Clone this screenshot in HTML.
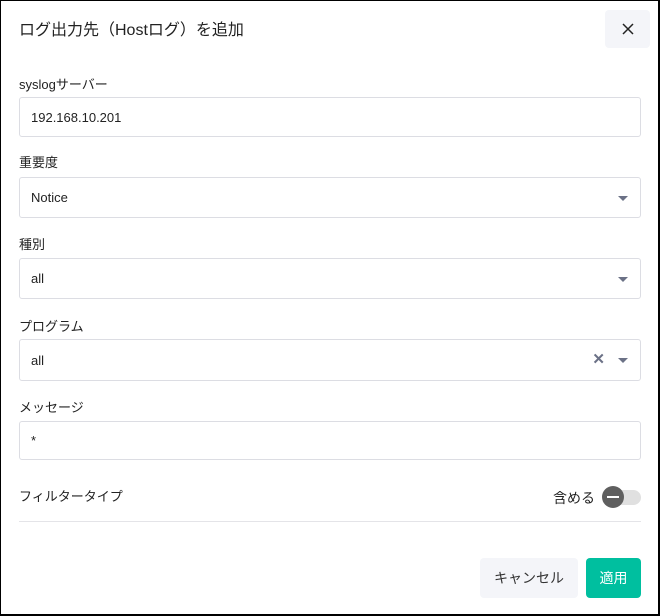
<!DOCTYPE html><html><head><meta charset="utf-8"><style>
*{box-sizing:border-box;margin:0;padding:0}
body{width:660px;height:616px;background:#fff;font-family:"Liberation Sans","Noto Sans CJK JP",sans-serif;color:#222;position:relative;overflow:hidden}
.frame{position:absolute;left:0;top:0;width:660px;height:616px;border:1px solid #000;border-right-width:2px;border-bottom-width:2px}
.a{position:absolute}
.title{left:19px;top:16px;font-size:16px;color:#222}
.close{left:605px;top:10px;width:45px;height:38px;background:#f4f5f9;border-radius:4px;text-align:center;line-height:38px;font-size:16px;font-weight:300}
.lbl{left:19px;font-size:13px;color:#222}
.box{left:19px;width:622px;border:1px solid #dcdde3;border-radius:3px;font-size:13px;padding-left:11px;display:flex;align-items:center}
.caret{position:absolute;right:12px;top:50%;margin-top:-2px;border-left:5px solid transparent;border-right:5px solid transparent;border-top:5px solid #6b7186}
.btn{border-radius:4px;font-size:14px;text-align:center;line-height:40px}
</style></head><body>
<div class="frame"></div>
<div class="a title">ログ出力先（Hostログ）を追加</div>
<div class="a close"><svg width="12" height="12" style="margin-top:13px" viewBox="0 0 12 12"><path d="M1 1L11 11M11 1L1 11" stroke="#222" stroke-width="1.5"/></svg></div>
<div class="a lbl" style="top:74px">syslogサーバー</div>
<div class="a box" style="top:97px;height:40px">192.168.10.201</div>
<div class="a lbl" style="top:152px">重要度</div>
<div class="a box" style="top:177px;height:41px">Notice<span class="caret"></span></div>
<div class="a lbl" style="top:234px">種別</div>
<div class="a box" style="top:258px;height:41px">all<span class="caret"></span></div>
<div class="a lbl" style="top:316px">プログラム</div>
<div class="a box" style="top:339px;height:42px">all<span class="a" style="right:35px;top:10px;color:#6b7186;font-size:15px;font-weight:bold">✕</span><span class="caret"></span></div>
<div class="a lbl" style="top:397px">メッセージ</div>
<div class="a box" style="top:421px;height:39px">*</div>
<div class="a lbl" style="top:486px">フィルタータイプ</div>
<div class="a" style="left:553px;top:488px;font-size:14px">含める</div>
<div class="a" style="left:603px;top:490px;width:38px;height:15px;border-radius:8px;background:#e0e0e0"></div>
<div class="a" style="left:602px;top:486px;width:22px;height:22px;border-radius:50%;background:#5f5f5f"><div class="a" style="left:5px;top:10px;width:12px;height:2px;background:#fff"></div></div>
<div class="a" style="left:19px;top:521px;width:622px;height:1px;background:#e4e4e8"></div>
<div class="a btn" style="left:480px;top:558px;width:98px;height:40px;background:#f4f5f9;color:#333">キャンセル</div>
<div class="a btn" style="left:586px;top:558px;width:55px;height:40px;background:#00bf9f;color:#fff">適用</div>
</body></html>
